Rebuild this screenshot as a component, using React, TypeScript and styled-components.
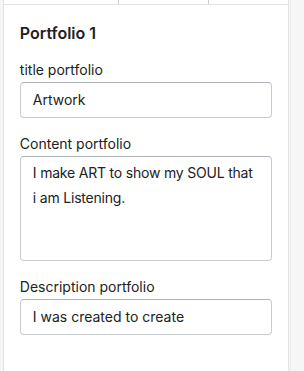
import * as React from 'react';
import styled, { createGlobalStyle } from 'styled-components';

const Global = createGlobalStyle`
  html, body {
    margin: 0;
    padding: 0;
    background: #f6f6f7;
    font-family: Inter, "Noto Sans", "Liberation Sans", sans-serif;
    color: #202223;
  }
`;

const Frame = styled.div`
  display: flex;
  height: 371px;
  overflow: hidden;
`;

const Gutter = styled.div`
  width: 3px;
  background: #f6f6f7;
`;

const Panel = styled.div`
  width: 285px;
  background: #fff;
  border-left: 1px solid #e1e3e5;
  border-right: 1px solid #e1e3e5;
  display: flex;
  flex-direction: column;
`;

const Tabs = styled.div`
  height: 4px;
  display: flex;
  border-bottom: 1px solid #e1e3e5;
`;

const Tab = styled.div<{ $w: number }>`
  width: ${(p) => p.$w}px;
  border-right: 1px solid #c9cccf;
`;

const Body = styled.div`
  padding: 16px 16px 0 16px;
  display: flex;
  flex-direction: column;
`;

const Title = styled.h2`
  margin: 0 0 15px 0;
  font-size: 16px;
  line-height: 24px;
  font-weight: 600;
`;

const Field = styled.div`
  display: flex;
  flex-direction: column;
  margin-bottom: 16px;
`;

const Label = styled.label`
  font-size: 14px;
  line-height: 20px;
  margin-bottom: 2px;
`;

const Input = styled.div`
  box-sizing: border-box;
  width: 252px;
  height: 36px;
  border: 1px solid #c9cccf;
  border-top-color: #aeb4b9;
  border-radius: 4px;
  padding: 0 12px;
  font-size: 14px;
  line-height: 34px;
  white-space: nowrap;
`;

const Area = styled(Input)`
  height: 105px;
  padding: 3px 14px 3px 12px;
  line-height: 25px;
  letter-spacing: -0.2px;
  white-space: normal;
`;

const Scroll = styled.div`
  width: 14px;
  background: #f6f6f7;
  border-left: 1px solid #ececec;
  margin-left: 1px;
`;

export default function App() {
  return (
    <Frame>
      <Global />
      <Gutter />
      <Panel>
        <Tabs>
          <Tab $w={114} />
          <Tab $w={89} />
        </Tabs>
        <Body>
          <Title>Portfolio 1</Title>
          <Field>
            <Label>title portfolio</Label>
            <Input>Artwork</Input>
          </Field>
          <Field>
            <Label>Content portfolio</Label>
            <Area>I make ART to show my SOUL that i am Listening.</Area>
          </Field>
          <Field>
            <Label>Description portfolio</Label>
            <Input>I was created to create</Input>
          </Field>
        </Body>
      </Panel>
      <Scroll />
    </Frame>
  );
}
